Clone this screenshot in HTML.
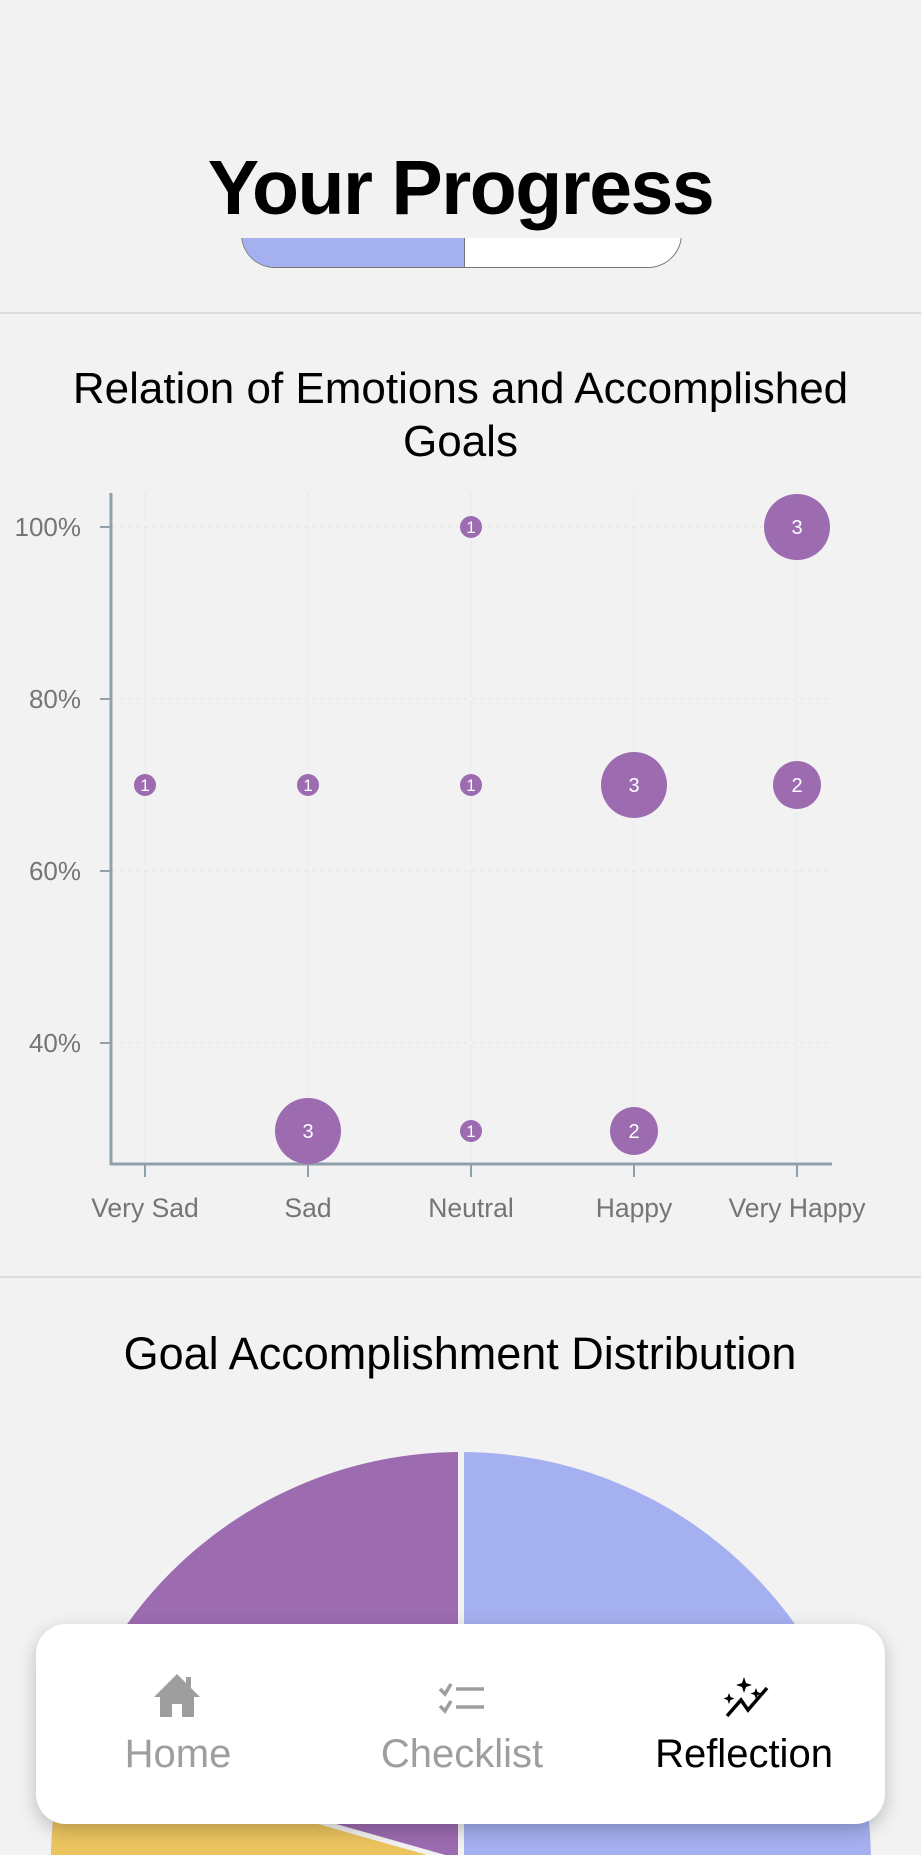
<!DOCTYPE html>
<html><head><meta charset="utf-8">
<style>
html,body{margin:0;padding:0;}
body{width:921px;height:1855px;overflow:hidden;background:#f2f2f2;position:relative;font-family:"Liberation Sans",sans-serif;}
.abs{position:absolute;}
</style></head><body>
<!-- header -->
<div class="abs" style="left:241px;top:200px;width:441px;height:68px;border:1.5px solid #777;border-top:none;border-radius:0 0 34px 34px;overflow:hidden;box-sizing:border-box;background:#fff;">
  <div style="position:absolute;left:0;top:0;width:222px;height:100%;background:#a5b0f0;border-right:1.5px solid #777;"></div>
</div>
<div class="abs" style="left:0;top:150px;width:921px;height:88px;background:#f2f2f2;"></div>
<div class="abs" style="left:0;top:138px;width:921px;text-align:center;font-size:77px;font-weight:bold;letter-spacing:-1.5px;color:#000;line-height:100px;">Your Progress</div>
<div class="abs" style="left:0;top:312px;width:921px;height:2px;background:#dcdcdc;"></div>

<div class="abs" style="left:0;top:362px;width:921px;text-align:center;font-size:44px;line-height:53px;color:#000;">Relation of Emotions and Accomplished<br>Goals</div>

<svg class="abs" style="left:0;top:0" width="921" height="1855">
  <g stroke="#e6e6e6" stroke-width="1" stroke-dasharray="4 4">
    <line x1="112" y1="527" x2="832" y2="527"/><line x1="112" y1="699" x2="832" y2="699"/>
    <line x1="112" y1="871" x2="832" y2="871"/><line x1="112" y1="1043" x2="832" y2="1043"/>
    <line x1="145" y1="493" x2="145" y2="1163"/><line x1="308" y1="493" x2="308" y2="1163"/>
    <line x1="471" y1="493" x2="471" y2="1163"/><line x1="634" y1="493" x2="634" y2="1163"/>
    <line x1="797" y1="493" x2="797" y2="1163"/>
  </g>
  <g stroke="#90a0aa" stroke-width="3" fill="none">
    <polyline points="111,493 111,1164 832,1164"/>
  </g>
  <g stroke="#90a0aa" stroke-width="2">
    <line x1="100" y1="527" x2="111" y2="527"/><line x1="100" y1="699" x2="111" y2="699"/>
    <line x1="100" y1="871" x2="111" y2="871"/><line x1="100" y1="1043" x2="111" y2="1043"/>
    <line x1="145" y1="1165" x2="145" y2="1177"/><line x1="308" y1="1165" x2="308" y2="1177"/>
    <line x1="471" y1="1165" x2="471" y2="1177"/><line x1="634" y1="1165" x2="634" y2="1177"/>
    <line x1="797" y1="1165" x2="797" y2="1177"/>
  </g>
  <g font-family="Liberation Sans, sans-serif" font-size="26" fill="#757575" text-anchor="end">
    <text x="81" y="536">100%</text><text x="81" y="708">80%</text>
    <text x="81" y="880">60%</text><text x="81" y="1052">40%</text>
  </g>
  <g font-family="Liberation Sans, sans-serif" font-size="26.5" fill="#757575" text-anchor="middle">
    <text x="145" y="1217">Very Sad</text><text x="308" y="1217">Sad</text>
    <text x="471" y="1217">Neutral</text><text x="634" y="1217">Happy</text>
    <text x="797" y="1217">Very Happy</text>
  </g>
  <g fill="#9c6bb0">
    <circle cx="471" cy="527" r="11"/><circle cx="797" cy="527" r="33"/>
    <circle cx="145" cy="785" r="11"/><circle cx="308" cy="785" r="11"/><circle cx="471" cy="785" r="11"/>
    <circle cx="634" cy="785" r="33"/><circle cx="797" cy="785" r="24"/>
    <circle cx="308" cy="1131" r="33"/><circle cx="471" cy="1131" r="11"/><circle cx="634" cy="1131" r="24"/>
  </g>
  <g font-family="Liberation Sans, sans-serif" fill="#fff" text-anchor="middle">
    <text x="471" y="533" font-size="17">1</text><text x="797" y="534" font-size="20">3</text>
    <text x="145" y="791" font-size="17">1</text><text x="308" y="791" font-size="17">1</text><text x="471" y="791" font-size="17">1</text>
    <text x="634" y="792" font-size="20">3</text><text x="797" y="792" font-size="20">2</text>
    <text x="308" y="1138" font-size="20">3</text><text x="471" y="1137" font-size="17">1</text><text x="634" y="1138" font-size="20">2</text>
  </g>
  <line x1="0" y1="1277" x2="921" y2="1277" stroke="#dcdcdc" stroke-width="2"/>
  <text x="460" y="1369" text-anchor="middle" font-family="Liberation Sans, sans-serif" font-size="45" fill="#000">Goal Accomplishment Distribution</text>
  <defs><clipPath id="pc"><circle cx="461" cy="1862" r="410"/></clipPath></defs>
  <g clip-path="url(#pc)">
    <rect x="0" y="1400" width="461" height="500" fill="#9c6bb0"/>
    <rect x="461" y="1400" width="460" height="500" fill="#a5b0f0"/>
    <polygon points="461,1862 -100,1703 -100,1900 461,1900" fill="#ebc45f"/>
    <line x1="461" y1="1862" x2="-100" y2="1703" stroke="#f2f2f2" stroke-width="5"/>
    <line x1="461" y1="1400" x2="461" y2="1900" stroke="#f2f2f2" stroke-width="6"/>
  </g>
</svg>

<!-- nav -->
<div class="abs" style="left:36px;top:1624px;width:849px;height:200px;background:#fff;border-radius:30px;box-shadow:0 6px 18px rgba(0,0,0,0.22);"></div>
<svg class="abs" style="left:0;top:0" width="921" height="1855">
  <g fill="#9e9e9e">
    <polygon points="177,1674 154,1697 160,1697 160,1717 172,1717 172,1704 182,1704 182,1717 194,1717 194,1697 200,1697 177,1674"/>
    <rect x="186" y="1677" width="5" height="12"/>
  </g>
  <g stroke="#9e9e9e" stroke-width="3.5" fill="none">
    <polyline points="440,1689 445,1694 451,1684"/>
    <polyline points="440,1706 445,1711 451,1701"/>
    <line x1="456" y1="1689" x2="484" y2="1689"/>
    <line x1="456" y1="1707" x2="484" y2="1707"/>
  </g>
  <g fill="#000">
    <path d="M744,1677 l2,6 6,2 -6,2 -2,6 -2,-6 -6,-2 6,-2z"/>
    <path d="M729,1693 l1.5,4 4,1.5 -4,1.5 -1.5,4 -1.5,-4 -4,-1.5 4,-1.5z"/>
    <path d="M756,1688 l1.5,4 4,1.5 -4,1.5 -1.5,4 -1.5,-4 -4,-1.5 4,-1.5z"/>
  </g>
  <polyline points="727,1716 741,1700 748,1710 767,1688" stroke="#000" stroke-width="3.5" fill="none"/>
  <g font-family="Liberation Sans, sans-serif" font-size="40" text-anchor="middle">
    <text x="178" y="1767" fill="#9e9e9e">Home</text>
    <text x="462" y="1767" fill="#9e9e9e">Checklist</text>
    <text x="744" y="1767" fill="#000">Reflection</text>
  </g>
</svg>
</body></html>
